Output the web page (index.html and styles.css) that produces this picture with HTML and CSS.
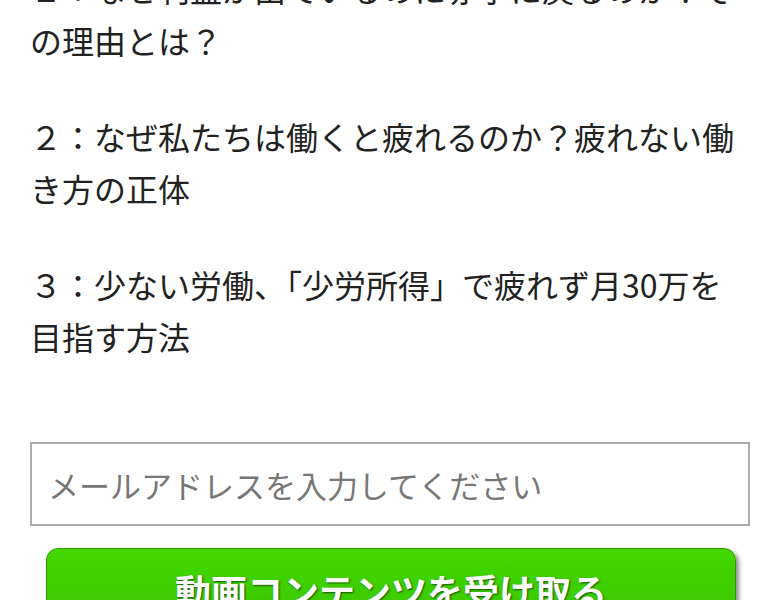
FILE: index.html
```html
<!DOCTYPE html>
<html lang="ja">
<head>
<meta charset="utf-8">
<title>動画コンテンツ</title>
<link rel="stylesheet" href="styles.css">
</head>
<body>
<main class="page">
  <section class="content">
    <p class="point">１：なぜ利益が出ているのに赤字に戻るのか？そ<br>の理由とは？</p>
    <p class="point">２：なぜ私たちは働くと疲れるのか？疲れない働<br>き方の正体</p>
    <p class="point">３：少ない労働、「少労所得」で疲れず月30万を<br>目指す方法</p>
  </section>
  <form class="signup">
    <input class="email" type="email" placeholder="メールアドレスを入力してください">
    <button class="submit" type="button">動画コンテンツを受け取る</button>
  </form>
</main>
</body>
</html>
```

FILE: styles.css
```css
html, body {
  margin: 0;
  padding: 0;
  background: #ffffff;
}

body {
  font-family: "Noto Sans CJK JP", "Noto Sans", sans-serif;
  color: #222222;
  overflow: hidden;
}

.page {
  width: 720px;
  padding: 0 30px;
}

.content {
  margin-top: -38px;
}

.point {
  margin: 0 0 44px 0;
  padding-left: 0;
  font-size: 32px;
  line-height: 52px;
  white-space: nowrap;
}

.point:last-child {
  margin-bottom: 0;
}

.signup {
  display: flex;
  flex-direction: column;
  margin-top: 80px;
}

.email {
  box-sizing: border-box;
  width: 720px;
  height: 84px;
  margin: 0;
  padding: 0 16px;
  border: 2px solid #aaaaaa;
  border-radius: 0;
  background: #ffffff;
  font-family: "Noto Sans CJK JP", "Noto Sans", sans-serif;
  font-size: 31px;
  color: #333333;
  outline: none;
}

.email::placeholder {
  color: #777777;
}

.submit {
  box-sizing: border-box;
  align-self: flex-start;
  width: 690px;
  margin: 22px 0 0 16px;
  padding: 16px 0 30px;
  border: 1px solid #2f9a00;
  border-radius: 12px;
  background: linear-gradient(to bottom, #44d800 0%, #3ccc00 50%, #33b800 100%);
  box-shadow: 3px 3px 4px rgba(0, 0, 0, 0.45);
  font-family: "Noto Sans CJK JP", "Noto Sans", sans-serif;
  font-size: 36px;
  font-weight: 700;
  line-height: 50px;
  color: #ffffff;
  text-shadow: 1px 1px 2px rgba(0, 0, 0, 0.6);
  text-align: center;
  cursor: pointer;
}
```
